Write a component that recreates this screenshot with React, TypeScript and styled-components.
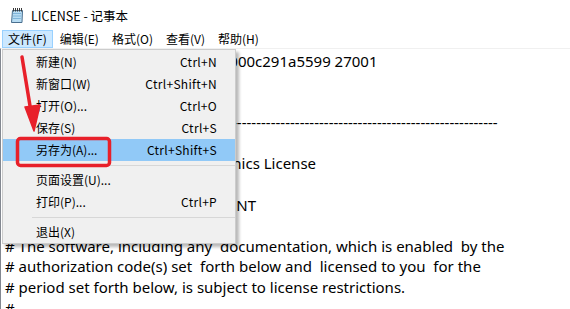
import React from "react";
import styled, { createGlobalStyle } from "styled-components";

const Global = createGlobalStyle`
  html, body { margin: 0; padding: 0; background: #fff; overflow: hidden; }
  * { box-sizing: border-box; }
`;

const UI_FONT = `"Noto Sans CJK SC", "Noto Sans", sans-serif`;

const Window = styled.div`
  position: relative;
  width: 570px;
  height: 309px;
  display: flex;
  flex-direction: column;
  background: #fff;
  overflow: hidden;
  font-family: ${UI_FONT};
`;

const TitleBar = styled.div`
  height: 30px;
  display: flex;
  align-items: center;
  gap: 6px;
  padding-left: 10px;
  font-size: 12.5px;
  color: #000;
`;

const TitleText = styled.span`
  line-height: 30px;
  margin-top: 1px;
`;

const MenuBar = styled.div`
  height: 19px;
  display: flex;
  align-items: stretch;
  padding-left: 2px;
  font-size: 12px;
`;

const MenuTitle = styled.div<{ $active?: boolean }>`
  display: flex;
  align-items: center;
  padding: 0 5px;
  margin-right: 1px;
  height: 18px;
  border: 1px solid ${(p) => (p.$active ? "#99d1ff" : "transparent")};
  background: ${(p) => (p.$active ? "#cce8ff" : "transparent")};
  line-height: 16px;
`;

const Editor = styled.div`
  flex: 1;
  border-top: 1px solid #f0f0f0;
  border-left: 1px solid #828790;
  padding: 1.5px 0 0 4px;
  font-family: "Noto Sans", "Open Sans", sans-serif;
  font-size: 15px;
  line-height: 20.6px;
  color: #000;
  white-space: pre;
`;

const Line = styled.div`
  height: 20.6px;
`;

const Dropdown = styled.div`
  position: absolute;
  left: 2px;
  top: 49px;
  width: 234px;
  background: #f0f0f0;
  border: 1px solid #cccccc;
  padding: 1px 0 0 0;
  box-shadow: 3px 3px 3px rgba(0, 0, 0, 0.28);
  font-size: 12px;
  display: flex;
  flex-direction: column;
`;

const Item = styled.div<{ $hot?: boolean }>`
  height: 22px;
  display: flex;
  align-items: center;
  justify-content: space-between;
  padding: 0 18px 0 33px;
  background: ${(p) => (p.$hot ? "#91c9f7" : "transparent")};
  color: #000;
  line-height: 22px;
`;

const Shortcut = styled.span`
  letter-spacing: 0.3px;
`;

const Separator = styled.div`
  height: 8px;
  display: flex;
  align-items: center;
  padding-left: 29px;
  &::after {
    content: "";
    flex: 1;
    height: 1px;
    background: #d7d7d7;
  }
`;

const Annotation = styled.svg`
  position: absolute;
  left: 0;
  top: 0;
  pointer-events: none;
`;

const NotepadIcon = () => (
  <svg width="15" height="16" viewBox="0 0 15 16">
    <path d="M2.5 3.5 L12.5 3.5 L12 15.5 L1.5 15.5 Z" fill="#b7dcf3" stroke="#4a6f8f" strokeWidth="1" />
    <path d="M3 6.5 H11 M3 9 H11 M2.8 11.5 H10.8" stroke="#7fb4d9" strokeWidth="1" />
    {[3.5, 5.5, 7.5, 9.5, 11.5].map((x) => (
      <line key={x} x1={x} y1="1" x2={x} y2="4.5" stroke="#3a3a3a" strokeWidth="1" />
    ))}
  </svg>
);

type Entry = { label: string; key?: string; hot?: boolean } | "sep";

const entries: Entry[] = [
  { label: "新建(N)", key: "Ctrl+N" },
  { label: "新窗口(W)", key: "Ctrl+Shift+N" },
  { label: "打开(O)...", key: "Ctrl+O" },
  { label: "保存(S)", key: "Ctrl+S" },
  { label: "另存为(A)...", key: "Ctrl+Shift+S", hot: true },
  "sep",
  { label: "页面设置(U)..." },
  { label: "打印(P)...", key: "Ctrl+P" },
  "sep",
  { label: "退出(X)" },
];

const lines = [
  "SERVER mgc_license_server_01  000c291a5599 27001",
  "VENDOR mgcld",
  "",
  "#" + "-".repeat(100),
  "",
  "#this is permanent Mentor Graphics License",
  "",
  "# END USER'S LICENSE AGREEMENT",
  "#",
  "# The software, including any  documentation, which is enabled  by the",
  "# authorization code(s) set  forth below and  licensed to you  for the",
  "# period set forth below, is subject to license restrictions.",
  "#",
];

const menus = ["文件(F)", "编辑(E)", "格式(O)", "查看(V)", "帮助(H)"];

export default function App() {
  return (
    <>
      <Global />
      <Window>
        <TitleBar>
          <NotepadIcon />
          <TitleText>LICENSE - 记事本</TitleText>
        </TitleBar>
        <MenuBar>
          {menus.map((m, i) => (
            <MenuTitle key={m} $active={i === 0}>
              {m}
            </MenuTitle>
          ))}
        </MenuBar>
        <Editor>
          {lines.map((l, i) => (
            <Line key={i}>{l}</Line>
          ))}
        </Editor>
        <Dropdown>
          {entries.map((e, i) =>
            e === "sep" ? (
              <Separator key={i} />
            ) : (
              <Item key={i} $hot={e.hot}>
                <span>{e.label}</span>
                {e.key && <Shortcut>{e.key}</Shortcut>}
              </Item>
            )
          )}
        </Dropdown>
        <Annotation width="570" height="309" viewBox="0 0 570 309">
          <rect x="17.5" y="138.5" width="92" height="27" rx="3" fill="none" stroke="#e8202a" strokeWidth="3.5" />
          <line x1="22" y1="57" x2="31" y2="112" stroke="#e8202a" strokeWidth="3.5" strokeLinecap="round" />
          <path d="M25 107 L40 105 L34 131 Z" fill="#e8202a" stroke="#e8202a" strokeWidth="1.5" strokeLinejoin="round" />
        </Annotation>
      </Window>
    </>
  );
}
